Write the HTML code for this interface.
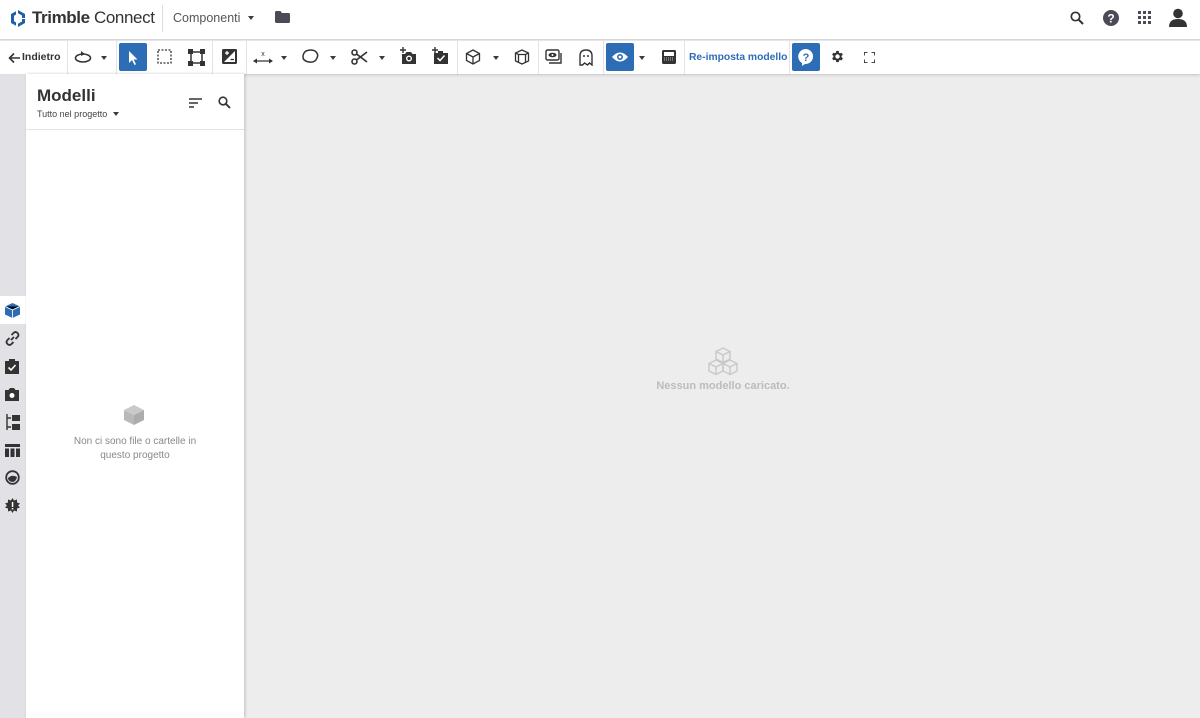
<!DOCTYPE html>
<html><head><meta charset="utf-8">
<style>
*{box-sizing:border-box;margin:0;padding:0}
body{width:1200px;height:718px;overflow:hidden;background:#ededed;font-family:"Liberation Sans",sans-serif;position:relative}
.abs{position:absolute}
#top{left:0;top:0;width:1200px;height:40px;background:#fff;border-bottom:1px solid #d8d8dc}
#tb{left:0;top:41px;width:1200px;height:33px;background:#fff;box-shadow:0 1px 3px rgba(0,0,0,.18)}
.sep{position:absolute;top:0;width:1px;height:33px;background:#e3e3e6}
.ic{position:absolute;top:8px}
.sel{position:absolute;top:2px;width:28px;height:28px;background:#2d6db5;border-radius:2px}
.dd{position:absolute;top:15px;width:0;height:0;border-left:3.5px solid transparent;border-right:3.5px solid transparent;border-top:4px solid #3a3a45}
#side{left:0;top:74px;width:26px;height:644px;background:#e1e1e6}
#panel{left:26px;top:74px;width:218px;height:644px;background:#fff;box-shadow:1px 0 3px rgba(0,0,0,.2)}
.si{position:absolute;left:5px}
</style></head><body>
<div id="top" class="abs">
 <svg class="abs" style="left:9px;top:9px" width="18" height="19" viewBox="0 0 18 19"><path d="M9 1 L16 5 L16 9 L13 9 L13 6.5 L9 4.2 Z" fill="#1f5fa8"/><path d="M2 5 L7 2.2 L7 5.6 L5 6.8 L5 12.2 L7 13.4 L7 16.8 L2 14 Z" fill="#1f5fa8"/><path d="M9 18 L16 14 L16 10 L13 10 L13 12.5 L9 14.8 Z" fill="#1f5fa8"/></svg>
 <div class="abs" style="left:32px;top:8px;font-size:17px;color:#333;letter-spacing:-0.4px;white-space:nowrap"><span style="font-weight:600">Trimble</span> Connect</div>
 <div class="abs" style="left:162px;top:5px;width:1px;height:27px;background:#ddd"></div>
 <div class="abs" style="left:173px;top:11px;font-size:12.5px;color:#555">Componenti</div>
 <div class="dd" style="left:248px;top:16px"></div>
 <svg class="abs" style="left:275px;top:11px" width="15" height="12"><path d="M0 1.5 Q0 0 1.5 0 H5.5 L7 2 H13.5 Q15 2 15 3.5 V10.5 Q15 12 13.5 12 H1.5 Q0 12 0 10.5Z" fill="#4b4b57"/></svg>
 <svg class="abs" style="left:1070px;top:11px" width="14" height="14"><circle cx="5.5" cy="5.5" r="4.2" fill="none" stroke="#333" stroke-width="1.7"/><path d="M8.5 8.5 L13 13" stroke="#333" stroke-width="2"/></svg>
 <svg class="abs" style="left:1103px;top:10px" width="16" height="16"><circle cx="8" cy="8" r="8" fill="#4b4b57"/><text x="8" y="12.5" text-anchor="middle" font-size="12" font-weight="bold" fill="#fff" font-family="Liberation Sans">?</text></svg>
 <svg class="abs" style="left:1138px;top:11px" width="13" height="13" fill="#4b4b57"><rect x="0" y="0" width="3" height="3"/><rect x="5" y="0" width="3" height="3"/><rect x="10" y="0" width="3" height="3"/><rect x="0" y="5" width="3" height="3"/><rect x="5" y="5" width="3" height="3"/><rect x="10" y="5" width="3" height="3"/><rect x="0" y="10" width="3" height="3"/><rect x="5" y="10" width="3" height="3"/><rect x="10" y="10" width="3" height="3"/></svg>
 <svg class="abs" style="left:1169px;top:8px" width="18" height="19"><circle cx="9" cy="5.5" r="4.8" fill="#333"/><path d="M0 19 Q0 11 9 11 Q18 11 18 19Z" fill="#333"/></svg>
</div>
<div id="tb" class="abs">
 <svg class="abs" style="left:8px;top:11px" width="13" height="12"><path d="M12 6 H2 M6 1.5 L1.5 6 L6 10.5" fill="none" stroke="#333" stroke-width="1.6"/></svg>
 <div class="abs" style="left:22px;top:10px;font-size:10.5px;font-weight:bold;color:#333">Indietro</div>
 <div class="sep" style="left:67px"></div>
 <svg class="ic" style="left:74px;top:10px" width="18" height="13"><ellipse cx="9" cy="7" rx="7.5" ry="4" fill="none" stroke="#333" stroke-width="1.6"/><path d="M7 0 L11 3 L7 5Z" fill="#333"/></svg>
 <div class="dd" style="left:101px"></div>
 <div class="sep" style="left:116px"></div>
 <div class="sel" style="left:119px"></div>
 <svg class="ic" style="left:127px;top:10px" width="12" height="14"><path d="M2 0 L2 12 L5 9 L7.5 14 L9 13.3 L6.7 8.5 L10.5 8.5Z" fill="#fff"/></svg>
 <svg class="ic" style="left:157px" width="15" height="15"><rect x="1" y="1" width="13" height="13" fill="none" stroke="#333" stroke-width="1.3" stroke-dasharray="2 1.5"/></svg>
 <svg class="ic" style="left:188px" width="17" height="17"><rect x="3" y="3" width="11" height="11" fill="none" stroke="#333" stroke-width="1.5"/><rect x="0" y="0" width="5" height="5" fill="#333"/><rect x="12" y="0" width="5" height="5" fill="#333"/><rect x="0" y="12" width="5" height="5" fill="#333"/><rect x="12" y="12" width="5" height="5" fill="#333"/></svg>
 <div class="sep" style="left:212px"></div>
 <svg class="ic" style="left:222px" width="15" height="15"><rect x="0" y="0" width="15" height="15" rx="1.5" fill="#333"/><path d="M2 13 L13 2 V13Z" fill="#fff"/><path d="M3 4 H7 M5 2 V6" stroke="#fff" stroke-width="1.3"/><path d="M8.5 10.5 H12" stroke="#333" stroke-width="1.3"/></svg>
 <div class="sep" style="left:246px"></div>
 <svg class="ic" style="left:253px" width="20" height="16"><path d="M1 12 H19" stroke="#333" stroke-width="1.3"/><path d="M0 12 L4 9.5 V14.5Z M20 12 L16 9.5 V14.5Z" fill="#333"/><text x="10" y="7" text-anchor="middle" font-size="7" fill="#333" font-family="Liberation Sans">x</text></svg>
 <div class="dd" style="left:281px"></div>
 <svg class="ic" style="left:302px" width="17" height="15"><path d="M4 2 Q9 0 13 2 Q17 5 15 9 Q13 14 7 13 Q1 12 1 8 Q1 4 4 2Z" fill="none" stroke="#333" stroke-width="1.5"/></svg>
 <div class="dd" style="left:330px"></div>
 <svg class="ic" style="left:351px" width="17" height="16"><circle cx="3.5" cy="3.5" r="2.5" fill="none" stroke="#333" stroke-width="1.6"/><circle cx="3.5" cy="12.5" r="2.5" fill="none" stroke="#333" stroke-width="1.6"/><path d="M5.5 5 L16 13 M5.5 11 L16 3" stroke="#333" stroke-width="1.7"/></svg>
 <div class="dd" style="left:379px"></div>
 <svg class="ic" style="left:400px;top:6px" width="17" height="18"><path d="M3 0 V6 M0 3 H6" stroke="#333" stroke-width="1.4"/><path d="M2 7 H5 L6.5 5 H11 L12.5 7 H16 V17 H2Z" fill="#333"/><circle cx="9" cy="11.5" r="3" fill="#fff"/><circle cx="9" cy="11.5" r="1.6" fill="#333"/></svg>
 <svg class="ic" style="left:432px;top:6px" width="17" height="18"><path d="M3 0 V6 M0 3 H6" stroke="#333" stroke-width="1.4"/><path d="M2 6 H6 V4 H11 V6 H16 V17 H2Z" fill="#333"/><path d="M5.5 11 L8 13.5 L12.5 8.5" fill="none" stroke="#fff" stroke-width="1.5"/></svg>
 <div class="sep" style="left:457px"></div>
 <svg class="ic" style="left:465px" width="16" height="16"><path d="M8 1 L14.5 4.5 V11.5 L8 15 L1.5 11.5 V4.5Z M1.5 4.5 L8 8 L14.5 4.5 M8 8 V15" fill="none" stroke="#333" stroke-width="1.3"/></svg>
 <div class="dd" style="left:493px"></div>
 <svg class="ic" style="left:514px" width="16" height="16"><path d="M8 1 L14.5 4 V12 L8 15 L1.5 12 V4Z M4.5 5.5 V13.3 M11.5 5.5 V13.3 M1.5 4 L4.5 5.5 H11.5 L14.5 4" fill="none" stroke="#333" stroke-width="1.3"/></svg>
 <div class="sep" style="left:538px"></div>
 <svg class="ic" style="left:545px" width="17" height="16"><rect x="1" y="1" width="13" height="10" rx="1.5" fill="none" stroke="#333" stroke-width="1.4"/><path d="M16 4 V14 H4" fill="none" stroke="#333" stroke-width="1.4"/><ellipse cx="7.5" cy="6" rx="4" ry="2.3" fill="#333"/><circle cx="7.5" cy="6" r="1" fill="#fff"/></svg>
 <svg class="ic" style="left:579px" width="14" height="17"><path d="M1 16 V7 Q1 1 7 1 Q13 1 13 7 V16 L10.5 14 L8.5 16 L5.5 14 L3.5 16Z" fill="none" stroke="#333" stroke-width="1.4"/><circle cx="5" cy="7" r="1" fill="#333"/><circle cx="9" cy="7" r="1" fill="#333"/></svg>
 <div class="sep" style="left:603px"></div>
 <div class="sel" style="left:606px"></div>
 <svg class="ic" style="left:611px;top:10px" width="18" height="12"><path d="M1 6 Q9 -3 17 6 Q9 15 1 6Z" fill="#fff"/><circle cx="9" cy="6" r="3" fill="#2d6db5"/><circle cx="9" cy="6" r="1.4" fill="#fff"/></svg>
 <div class="dd" style="left:639px"></div>
 <svg class="ic" style="left:662px;top:9px" width="14" height="14"><rect x="0" y="0" width="14" height="14" rx="1.5" fill="#333"/><rect x="2" y="2" width="10" height="4" fill="#fff"/><path d="M2 8 H12 M2 10 H12" stroke="#bbb" stroke-width="1" stroke-dasharray="1 1"/></svg>
 <div class="sep" style="left:684px"></div>
 <div class="abs" style="left:689px;top:11px;font-size:10.3px;font-weight:bold;color:#2d6db5;white-space:nowrap">Re-imposta modello</div>
 <div class="sep" style="left:789px"></div>
 <div class="sel" style="left:792px"></div>
 <svg class="ic" style="left:798px" width="16" height="17"><path d="M8 0 A7.5 7.5 0 1 1 7 15 L4 17 V14 A7.5 7.5 0 0 1 8 0Z" fill="#fff"/><text x="8" y="12" text-anchor="middle" font-size="11" font-weight="bold" fill="#2d6db5" font-family="Liberation Sans">?</text></svg>
 <svg class="ic" style="left:830px" width="15" height="15" viewBox="0 0 24 24"><path fill="#333" d="M19.4 13a7.8 7.8 0 0 0 0-2l2.1-1.6-2-3.5-2.5 1a7.3 7.3 0 0 0-1.7-1L15 3h-4l-.4 2.7a7.3 7.3 0 0 0-1.7 1l-2.5-1-2 3.5L6.5 11a7.8 7.8 0 0 0 0 2l-2.1 1.6 2 3.5 2.5-1a7.3 7.3 0 0 0 1.7 1L11 21h4l.4-2.7a7.3 7.3 0 0 0 1.7-1l2.5 1 2-3.5zM13 15.5a3.5 3.5 0 1 1 0-7 3.5 3.5 0 0 1 0 7z" transform="translate(-1 0)"/></svg>
 <svg class="ic" style="left:864px;top:11px" width="11" height="11"><path d="M0 3.5 V0 H3.5 M7.5 0 H11 V3.5 M11 7.5 V11 H7.5 M3.5 11 H0 V7.5" fill="none" stroke="#333" stroke-width="1.7"/></svg>
</div>
<div id="side" class="abs"></div>
<div class="abs" style="left:0;top:296px;width:26px;height:28px;background:#fff"></div>
<svg class="si abs" style="top:303px" width="15" height="15"><path d="M7.5 0 L15 3.5 V11.5 L7.5 15 L0 11.5 V3.5Z" fill="#2d6db5"/><path d="M0 3.5 L7.5 7 L15 3.5 M7.5 7 V15" stroke="#e1ecf7" stroke-width="1"/></svg>
<svg class="si abs" style="top:331px" width="15" height="15"><path d="M6 9 L9 6 M4.5 7 L2.5 9 Q0.5 11 2.5 13 Q4.5 15 6.5 13 L8.5 11 M6.5 4 L8.5 2 Q10.5 0 12.5 2 Q14.5 4 12.5 6 L10.5 8" fill="none" stroke="#333" stroke-width="1.8"/></svg>
<svg class="si abs" style="top:359px" width="14" height="15"><path d="M0 2 H4 V0 H10 V2 H14 V15 H0Z" fill="#333"/><path d="M3.5 8.5 L6 11 L10.5 6" fill="none" stroke="#fff" stroke-width="1.6"/></svg>
<svg class="si abs" style="top:388px" width="14" height="13"><path d="M0 2 H3.5 L5 0 H9 L10.5 2 H14 V13 H0Z" fill="#333"/><circle cx="7" cy="7.5" r="2.5" fill="#fff"/></svg>
<svg class="si abs" style="top:414px" width="15" height="16"><path d="M2 0 V16 M2 4 H6 M2 13 H6" stroke="#333" stroke-width="1.4"/><rect x="7" y="1" width="8" height="6" fill="#333"/><rect x="7" y="10" width="8" height="6" fill="#333"/></svg>
<svg class="si abs" style="top:444px" width="15" height="13"><rect x="0" y="0" width="15" height="3" fill="#333"/><rect x="0" y="4.5" width="4" height="8.5" fill="#333"/><rect x="5.5" y="4.5" width="4" height="8.5" fill="#333"/><rect x="11" y="4.5" width="4" height="8.5" fill="#333"/></svg>
<svg class="si abs" style="top:470px" width="15" height="15"><circle cx="7.5" cy="7.5" r="6.3" fill="none" stroke="#333" stroke-width="1.8"/><path d="M3 8 Q7 4 12 7 Q11 12 7 12 Q3 11 3 8Z" fill="#333"/></svg>
<svg class="si abs" style="top:498px" width="15" height="15"><path d="M7.5 0 L9 2.5 L12 1.5 L12 4.5 L15 5.5 L13 7.5 L15 9.5 L12 10.5 L12 13.5 L9 12.5 L7.5 15 L6 12.5 L3 13.5 L3 10.5 L0 9.5 L2 7.5 L0 5.5 L3 4.5 L3 1.5 L6 2.5Z" fill="#333"/><rect x="6.8" y="4" width="1.5" height="5" fill="#fff"/><rect x="6.8" y="10" width="1.5" height="1.5" fill="#fff"/></svg>
<div id="panel" class="abs">
 <div class="abs" style="left:11px;top:12px;font-size:17px;font-weight:bold;color:#333">Modelli</div>
 <div class="abs" style="left:11px;top:35px;font-size:9px;color:#444">Tutto nel progetto</div>
 <div class="dd" style="left:87px;top:38px"></div>
 <svg class="abs" style="left:163px;top:24px" width="14" height="10"><path d="M0 1 H13 M0 5 H9 M0 9 H5" stroke="#333" stroke-width="1.6"/></svg>
 <svg class="abs" style="left:192px;top:22px" width="13" height="13"><circle cx="5" cy="5" r="3.8" fill="none" stroke="#333" stroke-width="1.6"/><path d="M7.8 7.8 L12 12" stroke="#333" stroke-width="1.9"/></svg>
 <div class="abs" style="left:0;top:55px;width:218px;height:1px;background:#e3e3e6"></div>
 <svg class="abs" style="left:97px;top:330px" width="22" height="22"><path d="M11 1 L21 6 L11 11 L1 6Z" fill="#c9c9c9"/><path d="M1 6 L11 11 V21 L1 16Z" fill="#b9b9b9"/><path d="M21 6 L11 11 V21 L21 16Z" fill="#acacac"/></svg>
 <div class="abs" style="left:0;top:361px;width:218px;text-align:center;font-size:10px;line-height:14px;color:#888">Non ci sono file o cartelle in<br>questo progetto</div>
</div>
<svg class="abs" style="left:707px;top:347px" width="32" height="30"><g fill="none" stroke="#c8c8c8" stroke-width="1.4"><path d="M16 1 L23 4.5 L23 12 L16 15.5 L9 12 L9 4.5Z M9 4.5 L16 8 L23 4.5 M16 8 V15.5"/><path d="M9 13 L16 16.5 V24 L9 27.5 L2 24 V16.5Z M2 16.5 L9 20 L16 16.5 M9 20 V27.5"/><path d="M23 13 L30 16.5 V24 L23 27.5 L16 24 V16.5Z M16 16.5 L23 20 L30 16.5 M23 20 V27.5"/></g></svg>
<div class="abs" style="left:623px;top:380px;width:200px;text-align:center;font-size:11px;font-weight:bold;color:#bcbcbc">Nessun modello caricato.</div>
</body></html>
